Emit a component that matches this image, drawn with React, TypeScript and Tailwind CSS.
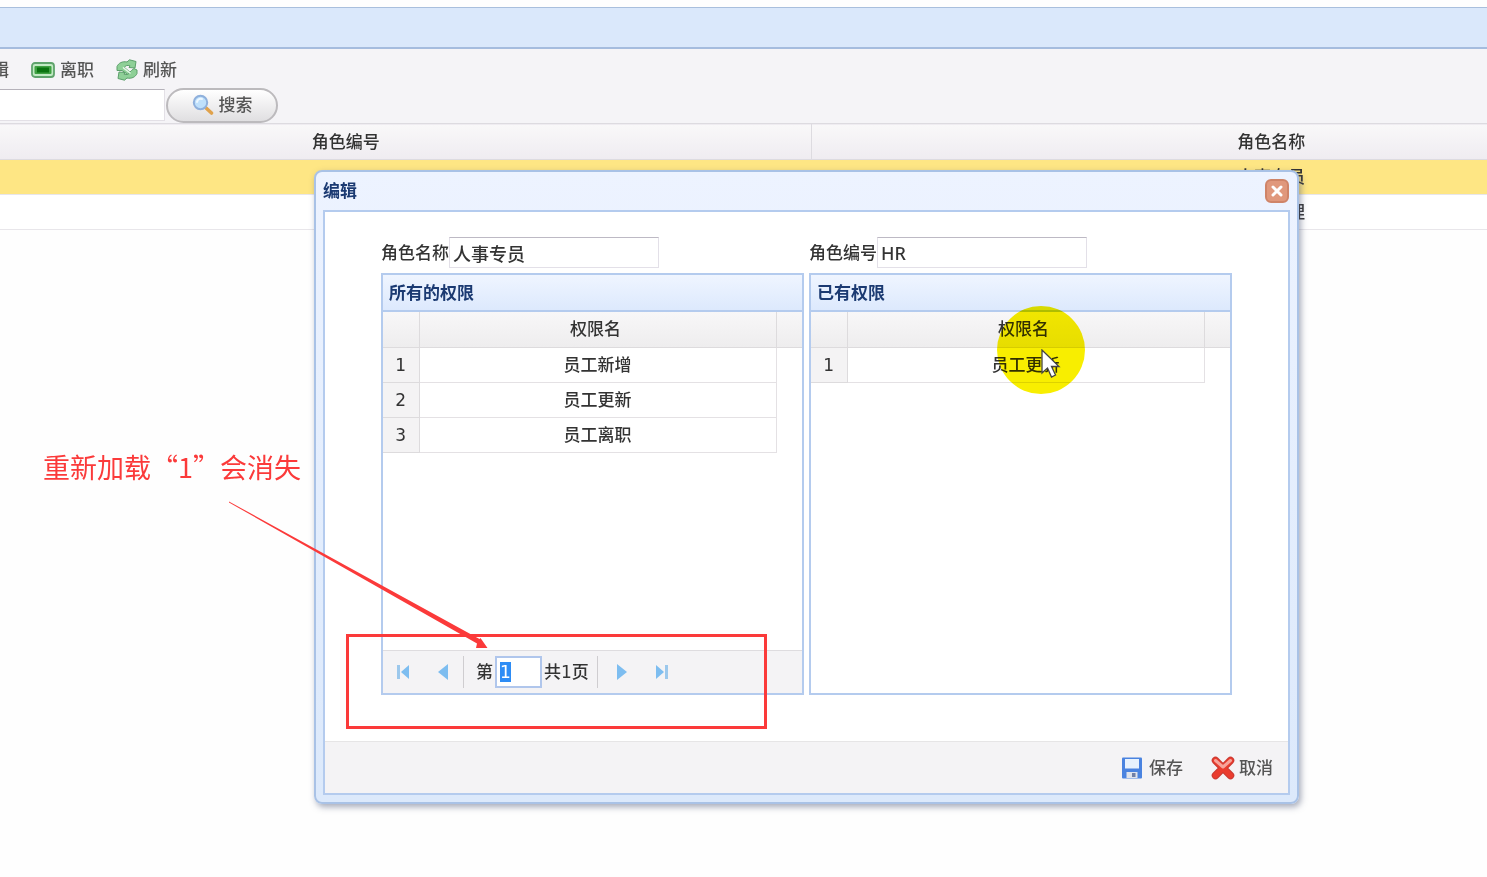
import React, { useEffect, useRef } from 'react';

const roles = [
  { id: 1, name: '人事专员', selected: true },
  { id: 2, name: '人事经理', selected: false },
];

const allPermissions = ['员工新增', '员工更新', '员工离职'];
const ownPermissions = ['员工更新'];

const RemoveIcon = () => (
  <svg width="24" height="16" viewBox="0 0 24 16" aria-hidden="true">
    <rect x="1" y="1" width="22" height="14" rx="3" fill="#c2eac4" stroke="#5fa36c" strokeWidth="1.8" />
    <rect x="3.500" y="4" width="17" height="8" rx="1" fill="#3fa142" />
    <rect x="6" y="5.500" width="12" height="5" fill="#0a7410" />
  </svg>
);

const ReloadIcon = () => (
  <svg width="22" height="22" viewBox="0 0 22 22" fill="none" strokeLinejoin="round" aria-hidden="true">
    <path
      d="M1 11.500V7.500C2.500 4 6.500 2 11 3L13.500 .8L20 2.500L19 9L13 8.500L14 6.800C11.500 6 9 6.500 8.500 8.500L15 14L13 16.500L6 11.500Z"
      fill="#8ed097"
      stroke="#5c9f6b"
    />
    <path
      d="M21 11V14.500C19.500 18 15.500 20 11 19L8.500 21.200L2 19.500L3 13L9 13.500L8 15.200C10.500 16 13 15.500 13.500 13.500L15.500 11.500L18 9.500Z"
      fill="#8ed097"
      stroke="#5c9f6b"
    />
    <path d="M7.500 8.800L14 14" stroke="#e4f6e6" strokeWidth="1.500" strokeLinecap="round" />
  </svg>
);

const SearchIcon = () => (
  <svg width="22" height="22" viewBox="0 0 22 22" aria-hidden="true">
    <path d="M13.500 13.500L19.500 19" stroke="#e0a24c" strokeWidth="3.600" strokeLinecap="round" />
    <circle cx="8.500" cy="8.500" r="6.700" fill="#bfe0fb" stroke="#8fb0dc" strokeWidth="2" />
    <path d="M5 8C5.500 5.500 7.500 4.500 10 5" stroke="#eef8ff" strokeWidth="2" fill="none" strokeLinecap="round" />
  </svg>
);

const SaveIcon = () => (
  <svg width="22" height="22" viewBox="0 0 22 22" aria-hidden="true">
    <rect x="1" y="0.500" width="20" height="21" rx="1" fill="#4a83e0" />
    <rect x="4" y="2" width="14" height="9.500" fill="#e8f2fd" />
    <rect x="5.500" y="15" width="11" height="6" fill="#dfe3ec" />
    <rect x="11" y="16" width="3.500" height="4" fill="#6f7fa6" />
  </svg>
);

const CancelIcon = () => (
  <svg width="24" height="24" viewBox="0 0 24 24" fill="none" strokeLinecap="round" aria-hidden="true">
    <path d="M4.500 4.500L19.500 19.500M19.500 4.500L4.500 19.500" stroke="#c93a32" strokeWidth="7.500" />
    <path d="M4.500 4.500L19.500 19.500M19.500 4.500L4.500 19.500" stroke="#ea3c2e" strokeWidth="5.500" />
    <path d="M4.500 4.500L12 11L19.500 4.500" stroke="#f6a49b" strokeWidth="3" strokeLinejoin="round" />
  </svg>
);

type PagerButtonProps = { label: string; bar?: boolean; flip?: boolean };

const PagerButton: React.FC<PagerButtonProps> = ({ label, bar, flip }) => (
  <button type="button" aria-label={label} className="flex h-8 w-10 items-center justify-center">
    <svg width="14" height="16" viewBox="0 0 14 16" className={flip ? 'rotate-180' : ''} aria-hidden="true">
      {bar && <rect x="1" y="1" width="3" height="14" fill="#9cc8ec" />}
      <path d={bar ? 'M13 1V15L5 8Z' : 'M12 0V16L2 8Z'} fill="#7dbdf0" />
    </svg>
  </button>
);

type FieldProps = { id: string; label: string; value: string };

const Field: React.FC<FieldProps> = ({ id, label, value }) => (
  <div className="flex flex-1 items-center">
    <label htmlFor={id} className="shrink-0">{label}</label>
    <input
      id={id}
      defaultValue={value}
      className="h-[31px] w-[210px] border border-[#e3e0e8] border-t-[#bdb9c4] bg-white px-[3px] font-['Noto_Sans','Noto_Sans_CJK_SC',sans-serif] text-lg/7 outline-none"
    />
  </div>
);

type PanelProps = { title: string; rows: string[]; children?: React.ReactNode };

const PermissionPanel: React.FC<PanelProps> = ({ title, rows, children }) => (
  <section className="flex min-h-[422px] flex-1 flex-col border-2 border-[#b4cbee] bg-white">
    <h3 className="flex h-[37px] items-center border-b-2 border-[#b4cbee] bg-linear-to-b from-[#eff5ff] to-[#dde9fd] px-1.5 font-bold text-[#1b3a72]">
      {title}
    </h3>
    <table className="w-full table-fixed border-collapse text-center">
      <colgroup>
        <col className="w-9" />
        <col />
        <col className="w-[26px]" />
      </colgroup>
      <thead>
        <tr className="h-[35px] bg-linear-to-b from-[#f8f7f8] to-[#eeedee]">
          <td className="border-r border-b border-[#dddbdd]" />
          <th scope="col" className="border-r border-b border-[#dddbdd] pr-1 font-medium">权限名</th>
          <td className="border-b border-[#dddbdd]" />
        </tr>
      </thead>
      <tbody>
        {rows.map((row, i) => (
          <tr key={row} className="h-[35px]">
            <td className="border-r border-b border-[#dddbdd] bg-[#f4f3f4]">{i + 1}</td>
            <td className="border-r border-b border-[#e4e1e4]">{row}</td>
            <td />
          </tr>
        ))}
      </tbody>
    </table>
    {children}
  </section>
);

const Pager: React.FC = () => {
  const pageRef = useRef<HTMLInputElement>(null);

  useEffect(() => {
    pageRef.current?.focus({ preventScroll: true });
    pageRef.current?.select();
  }, []);

  return (
    <div className="mt-auto flex h-[43px] items-center border-t border-[#dedcdf] bg-[#f4f3f5]">
      <PagerButton label="首页" bar />
      <PagerButton label="上一页" />
      <span className="mr-3 h-8 w-px bg-[#cfcdd0]" />
      <label htmlFor="page">第</label>
      <input
        id="page"
        ref={pageRef}
        defaultValue="1"
        className="mx-0.5 h-8 w-[47px] border-2 border-[#b0c6ec] bg-white px-[3px] outline-none selection:bg-[#2d8cf5] selection:text-white"
      />
      <span>共1页</span>
      <span className="mr-1 ml-2 h-8 w-px bg-[#cfcdd0]" />
      <PagerButton label="下一页" flip />
      <PagerButton label="尾页" bar flip />
    </div>
  );
};

const EditDialog: React.FC = () => (
  <div
    role="dialog"
    aria-label="编辑"
    className="absolute top-[170px] left-[314px] w-[985px] rounded-lg border-2 border-[#a9c2e6] bg-linear-to-b from-[#edf3ff] to-[#dce9fb] px-[7px] pb-[7px] shadow-[2px_3px_6px_rgba(80,90,120,0.5)]"
  >
    <header className="flex h-[38px] items-center justify-between pr-px">
      <h2 className="font-bold text-[#1b3a72]">编辑</h2>
      <button
        type="button"
        aria-label="关闭"
        className="flex size-6 items-center justify-center rounded-md border-2 border-[#cf8468] bg-[#e0987c]"
      >
        <svg width="12" height="12" viewBox="0 0 12 12" aria-hidden="true">
          <path d="M2 2L10 10M10 2L2 10" stroke="#fff" strokeWidth="3" strokeLinecap="round" />
        </svg>
      </button>
    </header>

    <div className="border-2 border-[#b4cbee] bg-white">
      <form className="px-14 pt-[25px] pb-[46px]">
        <div className="mb-[5px] flex gap-[5px]">
          <Field id="roleName" label="角色名称" value="人事专员" />
          <Field id="roleCode" label="角色编号" value="HR" />
        </div>
        <div className="flex gap-[5px]">
          <PermissionPanel title="所有的权限" rows={allPermissions}>
            <Pager />
          </PermissionPanel>
          <PermissionPanel title="已有权限" rows={ownPermissions} />
        </div>
      </form>

      <footer className="flex h-[52px] items-center justify-end gap-7 border-t border-[#e6e5e6] bg-[#f4f3f5] pr-[15px] text-[#555]">
        <button type="button" className="flex items-center gap-1.5">
          <SaveIcon /> 保存
        </button>
        <button type="button" className="flex items-center gap-1">
          <CancelIcon /> 取消
        </button>
      </footer>
    </div>
  </div>
);

export default function App() {
  return (
    <div
      lang="zh-CN"
      className="relative min-h-screen overflow-hidden bg-[#fefefe] pt-[7px] font-['DejaVu_Sans','Noto_Sans_CJK_SC',sans-serif] text-[17px]/6 font-medium text-[#333]"
    >
      <div className="h-[42px] border-t border-b-2 border-t-[#a9bfdd] border-b-[#a5bcde] bg-[#dae8fb]" />

      {/* Toolbar */}
      <div className="bg-[#f5f4f7] text-[#555]">
        <div className="-ml-[25px] flex h-[38px] items-center gap-[22px] pt-1">
          <button type="button">编辑</button>
          <button type="button" className="flex items-center gap-[5px]">
            <RemoveIcon /> 离职
          </button>
          <button type="button" className="flex items-center gap-[5px]">
            <ReloadIcon /> 刷新
          </button>
        </div>
        <div className="flex h-9 items-center gap-px">
          <input
            aria-label="关键字"
            className="h-8 w-[165px] border border-l-0 border-[#e3e0e6] border-t-[#b5b2ba] bg-white outline-none"
          />
          <button
            type="button"
            className="flex h-[35px] w-28 items-center justify-center gap-[5px] rounded-full border-2 border-[#bcbabd] bg-linear-to-b from-white to-[#e0dfe1]"
          >
            <SearchIcon /> 搜索
          </button>
        </div>
      </div>

      {/* Role grid */}
      <div className="overflow-hidden">
        <table className="-ml-[119px] w-[1850px] table-fixed border-collapse text-center">
          <colgroup>
            <col className="w-[930px]" />
            <col />
          </colgroup>
          <thead>
            <tr className="h-9 border-y border-[#dddbe0] bg-linear-to-b from-[#f9f8f9] to-[#efecf1]">
              <th scope="col" className="border-r border-[#dddbe0] font-medium">角色编号</th>
              <th scope="col" className="font-medium">角色名称</th>
            </tr>
          </thead>
          <tbody>
            {roles.map((role) => (
              <tr
                key={role.id}
                className={`h-[35px] border-b border-[#e8e6ea] ${role.selected ? 'bg-[#fee684]' : 'bg-white'}`}
              >
                <td />
                <td>{role.name}</td>
              </tr>
            ))}
          </tbody>
        </table>
      </div>

      <EditDialog />

      {/* Pointer highlight */}
      <div className="pointer-events-none absolute top-[306px] left-[997px] size-[88px] rounded-full bg-[#f8ee00] mix-blend-multiply" />
      <svg
        className="pointer-events-none absolute top-[349px] left-[1041px]"
        width="20"
        height="30"
        viewBox="0 0 20 30"
        aria-hidden="true"
      >
        <path d="M1 1V24L6.500 19L10.500 28L14.500 26L10.500 17.500H18Z" fill="#fff" stroke="#444" strokeWidth="1.300" />
      </svg>

      {/* Notes drawn over the page */}
      <p className="absolute top-[450px] left-[43px] font-['Noto_Sans_CJK_SC',sans-serif] text-[27px]/[34px] font-normal whitespace-nowrap text-[#fb3a3a]">
        重新加载“1”会消失
      </p>
      <svg
        className="pointer-events-none absolute top-[500px] left-[228px]"
        width="262"
        height="150"
        viewBox="0 0 262 150"
        aria-hidden="true"
      >
        <path d="M1 1.500L251.500 139L252.500 138L259.500 148H248L249 143.500L1 2.500Z" fill="#fb3a3a" />
      </svg>
      <div className="pointer-events-none absolute top-[634px] left-[346px] h-[95px] w-[421px] border-3 border-[#fb3a3a]" />
    </div>
  );
}
